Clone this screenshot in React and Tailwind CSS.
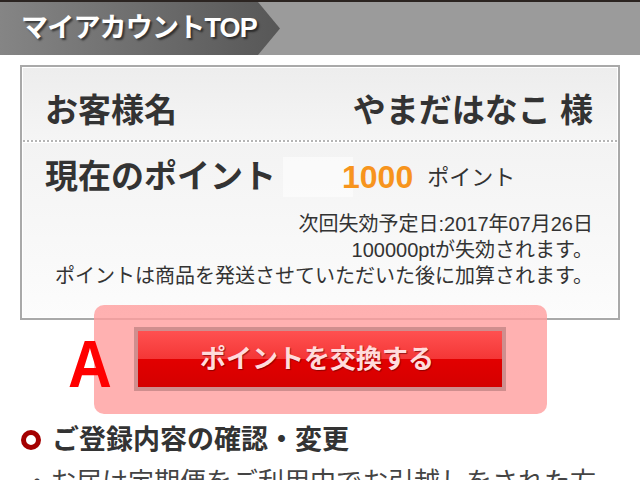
export default function App() {
  const font = { fontFamily: '"Liberation Sans", "Noto Sans CJK JP", sans-serif' };
  return (
    <div className="w-[640px] h-[480px] overflow-hidden bg-white text-[#333]" style={font}>
      {/* header */}
      <div className="border-t-[2px] border-[#2b2421] h-[55px] bg-[#9b9b9b] flex">
        <div className="w-[280px] h-full bg-gradient-to-r from-[#858585] to-[#575757] [clip-path:polygon(0_0,258px_0,280px_50%,258px_100%,0_100%)] flex items-center pl-[21px]">
          <h1 className="text-white font-bold text-[27px] tracking-[-0.8px] leading-none [text-shadow:2px_2px_2px_rgba(0,0,0,0.55)]">
            マイアカウントTOP
          </h1>
        </div>
      </div>

      {/* account box */}
      <div className="mx-5 mt-[10px] border-2 border-[#a9a9a9]">
        <div className="border border-white">
          <div className="flex justify-between items-center pl-[22px] pr-[24px] pt-[23px] pb-[9px] bg-gradient-to-b from-[#ededed] to-[#f5f5f5]">
            <span className="text-[33px] font-bold leading-[40px]">お客様名</span>
            <span className="text-[33px] font-bold leading-[40px]">やまだはなこ 様</span>
          </div>
          <div className="border-t-2 border-dotted border-[#b5b5b5]" />
          <div className="border-t border-white bg-gradient-to-b from-[#f3f3f3] to-[#fcfcfc] pb-[28px]">
            <div className="flex items-center pl-[22px] pt-[14px]">
              <span className="w-[238px] text-[33px] font-bold leading-[40px]">現在のポイント</span>
              <div className="relative flex items-center h-[40px]">
                <span className="absolute left-0 top-0 w-[70px] h-[40px] bg-white/50" />
                <span className="relative pl-[59px] text-[32px] font-bold text-[#f7941d]">1000</span>
                <span className="relative ml-[14px] text-[22px]">ポイント</span>
              </div>
            </div>
            <div className="mt-[14px] pr-[24px] text-right text-[20px] leading-[26px] text-[#333]">
              <p>次回失効予定日:2017年07月26日</p>
              <p>100000ptが失効されます。</p>
              <p>ポイントは商品を発送させていただいた後に加算されます。</p>
            </div>
          </div>
        </div>
      </div>

      {/* exchange button with annotation */}
      <div className="relative h-[94px] pt-[7px]">
        <div className="absolute left-[94px] top-[-15px] w-[453px] h-[109px] rounded-[10px] bg-[#ff9e9e]/80" />
        <span className="absolute left-[68px] top-[4px] text-[#ff0000] font-bold text-[66px] leading-[80px] scale-x-[0.92] origin-left">A</span>
        <div className="relative ml-[134px] w-[372px] h-[64px] p-[4px] bg-[#cf8e8e]">
          <div className="relative h-full flex flex-col">
            <div className="flex-1 bg-gradient-to-b from-[#ff5050] to-[#f43636]" />
            <div className="flex-1 bg-gradient-to-b from-[#e20000] to-[#d40000]" />
            <div className="absolute inset-0 flex items-center justify-center pr-[6px]">
              <span className="text-[26px] font-bold text-[#ffdcdc] [text-shadow:1px_1px_1px_rgba(90,0,0,0.6)]">
                ポイントを交換する
              </span>
            </div>
          </div>
        </div>
      </div>

      {/* section */}
      <div className="mt-[10px] flex items-center pl-[21px]">
        <span className="w-[20px] h-[20px] rounded-full border-[5px] border-[#a40000] mr-[11px]" />
        <h2 className="text-[27px] font-bold leading-[32px] text-[#333]">ご登録内容の確認・変更</h2>
      </div>
      <p className="mt-[9px] pl-[24px] text-[26px] leading-[34px] text-[#444] whitespace-nowrap">
        ・お届け定期便をご利用中でお引越しをされた方
      </p>
    </div>
  );
}
